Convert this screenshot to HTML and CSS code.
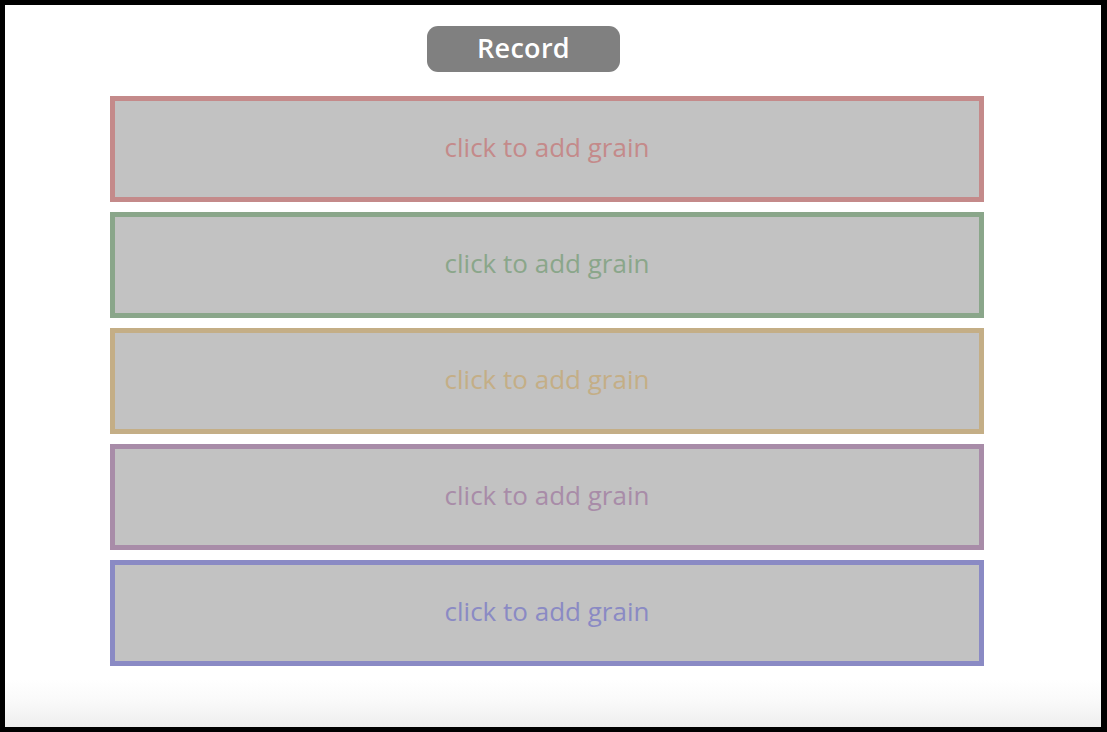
FILE: index.html
```html
<!DOCTYPE html>
<html lang="en">
<head>
<meta charset="utf-8">
<title>Grains</title>
<link rel="stylesheet" href="styles.css">
</head>
<body>
<div class="frame">
  <main class="screen">
    <button class="record">Record</button>
    <div class="grains">
      <div class="grain red">click to add grain</div>
      <div class="grain green">click to add grain</div>
      <div class="grain tan">click to add grain</div>
      <div class="grain purple">click to add grain</div>
      <div class="grain blue">click to add grain</div>
    </div>
  </main>
</div>
</body>
</html>
```

FILE: styles.css
```css
html, body {
  margin: 0;
  padding: 0;
  background: #000;
}
.frame {
  width: 1107px;
  height: 732px;
  box-sizing: border-box;
  border-style: solid;
  border-color: #000;
  border-width: 5px 6px 5px 5px;
}
.screen {
  height: 100%;
  box-sizing: border-box;
  background: linear-gradient(to bottom, #ffffff 0, #ffffff 675px, #fafafa 695px, #eeeeee 722px);
  padding: 21px 0 0 105px;
  display: flex;
  flex-direction: column;
  font-family: "Open Sans", "Liberation Sans", sans-serif;
}
.record {
  align-self: flex-start;
  margin-left: 317px;
  width: 193px;
  height: 46px;
  border: none;
  border-radius: 11px;
  background: #808080;
  color: #fff;
  font-family: "Open Sans", "Liberation Sans", sans-serif;
  font-size: 27px;
  font-weight: 600;
  letter-spacing: 0.3px;
  padding: 0 0 3px;
  cursor: pointer;
}
.grains {
  margin-top: 24px;
  display: flex;
  flex-direction: column;
  gap: 10.4px;
  width: 874px;
}
.grain {
  height: 105.6px;
  box-sizing: border-box;
  border: 5px solid;
  background: #c2c2c2;
  display: flex;
  align-items: center;
  justify-content: center;
  font-size: 26px;
  padding-bottom: 4px;
}
.red { border-color: #c48a8a; color: #c48a8a; }
.green { border-color: #8aa68a; color: #8aa68a; }
.tan { border-color: #c4ae86; color: #c4ae86; }
.purple { border-color: #a88ca8; color: #a88ca8; }
.blue { border-color: #8a8ac4; color: #8a8ac4; }
```
